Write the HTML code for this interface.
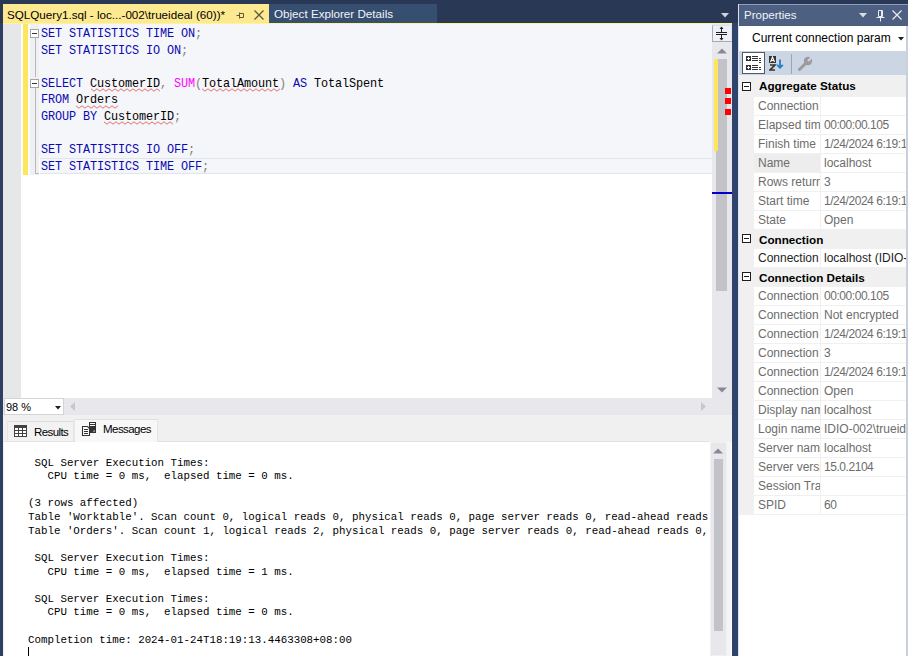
<!DOCTYPE html>
<html><head><meta charset="utf-8">
<style>
*{margin:0;padding:0;box-sizing:border-box}
html,body{width:908px;height:656px;overflow:hidden;background:#293955;font-family:"Liberation Sans",sans-serif}
.a{position:absolute}
.t{white-space:pre;line-height:1}
/* doc tabs */
#tab1{left:3px;top:4px;width:266px;height:19px;background:#fde98f}
#tab2{left:269px;top:4px;width:168px;height:19px;background:#364e6f}
/* editor */
#ed{left:3px;top:23px;width:729px;height:375px;background:#fff;overflow:hidden}
.code{font-family:"Liberation Mono",monospace;font-size:11.85px;letter-spacing:-0.11px;line-height:16.6px;white-space:pre;color:#000;}
.kw{color:#0a0ab0}
.fn{color:#ff00ff}
.gr{color:#808080}
.sq{}
.mono{font-family:"Liberation Mono",monospace;font-size:10.8px;line-height:13.63px;white-space:pre;color:#000}
.pn{font-size:11.5px;color:#6d6d6d;white-space:pre;line-height:1}

.cat{left:0;width:167px;height:19px;background:#f0f0f0}
.mbox{left:3px;top:4px;width:9px;height:9px;border:1px solid #1e1e1e;background:#fff}
.mline{left:5px;top:8px;width:5px;height:1px;background:#1e1e1e}
.ct{left:20px;top:4px;font-size:11.7px;font-weight:bold;color:#000}
.row{left:0;width:167px;height:19px;background:#f0f0f0}
.nm{left:15px;top:0;width:66px;height:19px;background:#fff;border-bottom:1px solid #f0f0f0;overflow:hidden}
.nsel{background:#ededed}
.vl{left:82px;top:0;width:85px;height:19px;background:#fff;border-bottom:1px solid #f0f0f0;overflow:hidden}
.nm span{position:absolute;left:4px;top:3px;font-size:12px;color:#6d6d6d}
.vl span{position:absolute;left:3px;top:3px;font-size:12px;color:#6d6d6d}
.num{letter-spacing:-0.45px}
.dk .nm span,.dk .vl span{color:#1e1e1e}
</style></head><body>
<!-- tabs -->
<div class="a" id="tab1">
  <div class="a t" style="left:4px;top:5px;font-size:11.65px;color:#000">SQLQuery1.sql - loc...-002\trueideal (60))*</div>
  <svg class="a" style="left:233px;top:7px" width="9" height="9" viewBox="0 0 9 9"><path d="M0.5 4.5H3.5M3.5 1.5V7.5M3.5 2.5H7.5V6.5H3.5" stroke="#5c5a3c" stroke-width="1" fill="none"/></svg>
  <svg class="a" style="left:251px;top:6px" width="10" height="10" viewBox="0 0 10 10"><path d="M0.5 0.5L9.5 9.5M9.5 0.5L0.5 9.5" stroke="#5c5a3c" stroke-width="1.3" fill="none"/></svg>
</div>
<div class="a" id="tab2">
  <div class="a t" style="left:5px;top:4px;font-size:11.65px;color:#f2f4f8">Object Explorer Details</div>
</div>
<svg class="a" style="left:721px;top:13px" width="9" height="5" viewBox="0 0 9 5"><path d="M0 0H8L4 4.5Z" fill="#ced4dd"/></svg>

<div class="a" id="ed">
  <div class="a" style="left:0;top:0;width:729px;height:1px;background:#fff29d"></div>
  <div class="a" style="left:0;top:1px;width:18px;height:374px;background:#e6e7e8"></div>
  <div class="a" style="left:20px;top:1px;width:5px;height:151px;background:#fee65b"></div>
  <div class="a" style="left:25px;top:1px;width:684px;height:134px;background:#f5f6fa"></div>
  <div class="a" style="left:25px;top:1px;width:2px;height:151px;background:#fcfcfd"></div>
  <div class="a" style="left:27px;top:1px;width:9px;height:151px;background:#eef0f4"></div>
  <div class="a" style="left:37px;top:135px;width:672px;height:16px;border-top:1px solid #e3e4e9;border-bottom:1px solid #e3e4e9;background:#f5f6fa"></div>
  <!-- fold boxes -->
  <div class="a" style="left:27px;top:6px;width:9px;height:9px;border:1px solid #a5a5a5;background:#fff"></div>
  <div class="a" style="left:29px;top:10px;width:5px;height:1px;background:#333"></div>
  <div class="a" style="left:32px;top:15px;width:1px;height:39px;background:#b8b8b8"></div>
  <div class="a" style="left:27px;top:56px;width:9px;height:9px;border:1px solid #a5a5a5;background:#fff"></div>
  <div class="a" style="left:29px;top:60px;width:5px;height:1px;background:#333"></div>
  <div class="a" style="left:32px;top:65px;width:1px;height:86px;background:#b8b8b8"></div>
  <div class="a" style="left:32px;top:150px;width:4px;height:1px;background:#b8b8b8"></div>
  <div class="a code" style="left:38px;top:3px"><span class="kw">SET STATISTICS TIME ON</span><span class="gr">;</span>
<span class="kw">SET STATISTICS IO ON</span><span class="gr">;</span>

<span class="kw">SELECT</span> <span class="sq">CustomerID</span><span class="gr">,</span> <span class="fn">SUM</span><span class="gr">(</span><span class="sq">TotalAmount</span><span class="gr">)</span> <span class="kw">AS</span> TotalSpent
<span class="kw">FROM</span> <span class="sq">Orders</span>
<span class="kw">GROUP BY</span> <span class="sq">CustomerID</span><span class="gr">;</span>

<span class="kw">SET STATISTICS IO OFF</span><span class="gr">;</span>
<span class="kw">SET STATISTICS TIME OFF</span><span class="gr">;</span></div>
<svg class="a" style="left:88px;top:65px" width="73" height="4"><polyline points="0.0,0.8 3.0,3.2 6.0,0.8 9.0,3.2 12.0,0.8 15.0,3.2 18.0,0.8 21.0,3.2 24.0,0.8 27.0,3.2 30.0,0.8 33.0,3.2 36.0,0.8 39.0,3.2 42.0,0.8 45.0,3.2 48.0,0.8 51.0,3.2 54.0,0.8 57.0,3.2 60.0,0.8 63.0,3.2 66.0,0.8 69.0,3.2" fill="none" stroke="#e07070" stroke-width="1"/></svg>
<svg class="a" style="left:199px;top:65px" width="81" height="4"><polyline points="0.0,0.8 3.0,3.2 6.0,0.8 9.0,3.2 12.0,0.8 15.0,3.2 18.0,0.8 21.0,3.2 24.0,0.8 27.0,3.2 30.0,0.8 33.0,3.2 36.0,0.8 39.0,3.2 42.0,0.8 45.0,3.2 48.0,0.8 51.0,3.2 54.0,0.8 57.0,3.2 60.0,0.8 63.0,3.2 66.0,0.8 69.0,3.2 72.0,0.8 75.0,3.2 78.0,0.8" fill="none" stroke="#e07070" stroke-width="1"/></svg>
<svg class="a" style="left:73px;top:82px" width="46" height="4"><polyline points="0.0,0.8 3.0,3.2 6.0,0.8 9.0,3.2 12.0,0.8 15.0,3.2 18.0,0.8 21.0,3.2 24.0,0.8 27.0,3.2 30.0,0.8 33.0,3.2 36.0,0.8 39.0,3.2 42.0,0.8" fill="none" stroke="#e07070" stroke-width="1"/></svg>
<svg class="a" style="left:101px;top:98px" width="74" height="4"><polyline points="0.0,0.8 3.0,3.2 6.0,0.8 9.0,3.2 12.0,0.8 15.0,3.2 18.0,0.8 21.0,3.2 24.0,0.8 27.0,3.2 30.0,0.8 33.0,3.2 36.0,0.8 39.0,3.2 42.0,0.8 45.0,3.2 48.0,0.8 51.0,3.2 54.0,0.8 57.0,3.2 60.0,0.8 63.0,3.2 66.0,0.8 69.0,3.2" fill="none" stroke="#e07070" stroke-width="1"/></svg>
  <!-- vscroll -->
  <div class="a" style="left:709px;top:1px;width:20px;height:374px;background:#e8e8ec"></div>
  <div class="a" style="left:709px;top:2px;width:20px;height:17px;background:#eef0f8;border:1px solid #dfe2ea;border-left-color:#a9abb3;border-bottom-color:#a9abb3"></div>
  <svg class="a" style="left:712px;top:2px" width="14" height="17" viewBox="0 0 14 17"><path d="M1 7.5H12M1 9.5H12M6.5 3V7M6.5 10V14" stroke="#1e1e1e" stroke-width="1" fill="none"/><path d="M6.5 1.5L4.5 4H8.5ZM6.5 15.5L4.5 13H8.5Z" fill="#1e1e1e"/></svg>
  <svg class="a" style="left:714px;top:25px" width="10" height="6" viewBox="0 0 10 6"><path d="M0 5.5H10L5 0.5Z" fill="#868999"/></svg>
  <div class="a" style="left:713px;top:36px;width:11px;height:232px;background:#c2c3c9"></div>
  <div class="a" style="left:711px;top:36px;width:4px;height:92px;background:#fee65b"></div>
  <div class="a" style="left:722px;top:65px;width:6px;height:6px;background:#ff0000"></div>
  <div class="a" style="left:722px;top:75px;width:6px;height:6px;background:#ff0000"></div>
  <div class="a" style="left:722px;top:86px;width:6px;height:6px;background:#ff0000"></div>
  <div class="a" style="left:709px;top:169px;width:20px;height:2px;background:#0000cd"></div>
  <svg class="a" style="left:714px;top:364px" width="10" height="6" viewBox="0 0 10 6"><path d="M0 0.5H10L5 5.5Z" fill="#868999"/></svg>
</div>

<!-- zoom bar -->
<div class="a" style="left:3px;top:398px;width:729px;height:17px;background:#e8e8ec">
  <div class="a" style="left:1px;top:0;width:60px;height:17px;background:#fff;border:1px solid #d4d4d8"></div>
  <div class="a t" style="left:3px;top:4px;font-size:11px;color:#000">98 %</div>
  <svg class="a" style="left:52px;top:8px" width="6" height="4" viewBox="0 0 6 4"><path d="M0 0H6L3 3.5Z" fill="#1e1e1e"/></svg>
  <svg class="a" style="left:67px;top:4px" width="5" height="9" viewBox="0 0 5 9"><path d="M5 0V9L0 4.5Z" fill="#c6c6cc"/></svg>
  <svg class="a" style="left:698px;top:4px" width="5" height="9" viewBox="0 0 5 9"><path d="M0 0V9L5 4.5Z" fill="#c6c6cc"/></svg>
</div>
<!-- results tabs -->
<div class="a" style="left:3px;top:415px;width:729px;height:27px;background:#f0f0f0">
  <div class="a" style="left:0;top:26px;width:706px;height:1px;background:#e2e2e2"></div>
  <div class="a" style="left:4px;top:6px;width:67px;height:20px;background:#f2f2f2;border-top:1px solid #dcdcdc;border-left:1px solid #e6e6e6;border-right:1px solid #e6e6e6"></div>
  <div class="a" style="left:71px;top:4px;width:84px;height:23px;background:#f8f8f8;border-top:1px solid #e0e0e0;border-left:1px solid #e6e6e6;border-right:1px solid #e6e6e6"></div>
  <!-- grid icon -->
  <svg class="a" style="left:11px;top:10px" width="13" height="12" viewBox="0 0 13 12"><rect x="0" y="0" width="13" height="12" fill="#424242"/><g fill="#fff"><rect x="1" y="3" width="3" height="2"/><rect x="5" y="3" width="3" height="2"/><rect x="9" y="3" width="3" height="2"/><rect x="1" y="6" width="3" height="2"/><rect x="5" y="6" width="3" height="2"/><rect x="9" y="6" width="3" height="2"/><rect x="1" y="9" width="3" height="2"/><rect x="5" y="9" width="3" height="2"/><rect x="9" y="9" width="3" height="2"/></g></svg>
  <div class="a t" style="left:31px;top:12px;font-size:11.5px;color:#000;letter-spacing:-0.6px">Results</div>
  <!-- messages icon -->
  <svg class="a" style="left:78px;top:6px" width="16" height="16" viewBox="0 0 16 16"><rect x="8" y="1" width="7" height="11" fill="#333"/><rect x="9" y="2" width="5" height="1" fill="#fff"/><rect x="9" y="4" width="5" height="1" fill="#fff"/><rect x="12.5" y="9.5" width="1.2" height="1.2" fill="#fff"/><path d="M1.5 5.5H6.5L8.5 7.5V14.5H1.5Z" fill="#fff" stroke="#333" stroke-width="1.1"/><path d="M3 8.5H7M3 10.5H7M3 12.5H7" stroke="#333" stroke-width="1"/></svg>
  <div class="a t" style="left:100px;top:9px;font-size:11.5px;color:#000;letter-spacing:-0.55px">Messages</div>
</div>
<!-- messages -->
<div class="a" style="left:3px;top:442px;width:1px;height:214px;background:#eef0f4"></div>
<div class="a" style="left:4px;top:442px;width:728px;height:214px;background:#fff;overflow:hidden">
  <div class="a" style="left:0;top:0;width:705px;height:214px;overflow:hidden">
<div class="a mono" style="left:24px;top:14.5px"> SQL Server Execution Times:
   CPU time = 0 ms,  elapsed time = 0 ms.

(3 rows affected)
Table 'Worktable'. Scan count 0, logical reads 0, physical reads 0, page server reads 0, read-ahead reads 0, page server read-ahead reads 0, lob logical reads 0
Table 'Orders'. Scan count 1, logical reads 2, physical reads 0, page server reads 0, read-ahead reads 0, page server read-ahead reads 0, lob logical reads 0

 SQL Server Execution Times:
   CPU time = 0 ms,  elapsed time = 1 ms.

 SQL Server Execution Times:
   CPU time = 0 ms,  elapsed time = 0 ms.

Completion time: 2024-01-24T18:19:13.4463308+08:00</div>
  <div class="a" style="left:24px;top:205px;width:1px;height:9px;background:#000"></div>
  </div>
  <div class="a" style="left:706px;top:0;width:17px;height:214px;background:#e8e8ec;border:1px solid #f0f0f3"></div>
  <svg class="a" style="left:709px;top:6px" width="10" height="6" viewBox="0 0 10 6"><path d="M0 5.5H10L5 0.5Z" fill="#868999"/></svg>
  <div class="a" style="left:710px;top:17px;width:9px;height:172px;background:#c2c3c9"></div>
  <div class="a" style="left:723px;top:0;width:4px;height:214px;background:#f5f5f5"></div>
</div>

<!-- properties -->
<div class="a" style="left:732px;top:23px;width:6px;height:633px;background:#30436c"></div>
<div class="a" style="left:0;top:23px;width:3px;height:633px;background:#2f3f62"></div>
<div class="a" style="left:738px;top:4px;width:170px;height:652px;background:#fff;border-left:1px solid #dde3ee">
  <div class="a" style="left:0;top:0;width:169px;height:22px;background:#4d6082;border-top:1px solid #8b9cbc"></div>
  <div class="a t" style="left:5px;top:6px;font-size:11.5px;color:#f0f2f6">Properties</div>
  <svg class="a" style="left:120px;top:9px" width="9" height="5" viewBox="0 0 9 5"><path d="M0 0H8L4 4.5Z" fill="#d8dde6"/></svg>
  <svg class="a" style="left:137px;top:6px" width="9" height="12" viewBox="0 0 9 12"><path d="M2.5 0.5H6.5V6.5H2.5Z M0.5 7.5H8.5 M4.5 7.5V11.5 M5.5 1V6" stroke="#e8ecf2" stroke-width="1" fill="none"/></svg>
  <svg class="a" style="left:153px;top:6px" width="10" height="10" viewBox="0 0 10 10"><path d="M0.5 0.5L9.5 9.5M9.5 0.5L0.5 9.5" stroke="#e8ecf2" stroke-width="1.2" fill="none"/></svg>
  
  <div class="a t" style="left:13px;top:28px;font-size:12px;color:#000">Current connection param</div>
  <svg class="a" style="left:159px;top:33px" width="6" height="4" viewBox="0 0 6 4"><path d="M0 0H6L3 3.5Z" fill="#1e1e1e"/></svg>
  <div class="a" style="left:0;top:47px;width:167px;height:24px;background:#ccd5e4"></div>
  <div class="a" style="left:3px;top:48px;width:23px;height:22px;background:#fff;border:1px solid #4d5a70"></div>
  <svg class="a" style="left:7px;top:52px" width="15" height="15" viewBox="0 0 15 15"><rect x="0" y="0" width="5" height="5" fill="#333"/><rect x="0" y="9" width="5" height="5" fill="#333"/><path d="M1 2.5H4M2.5 1V4M1 11.5H4M2.5 10V13" stroke="#fff" stroke-width="1"/><path d="M6 0.5H12M6 2.5H12M6 4.5H12M6 9.5H12M6 11.5H12M6 13.5H12" stroke="#333" stroke-width="1"/><path d="M13 2.5H15M13 4.5H15M13 6.5H15M13 11.5H15M13 13.5H15" stroke="#333" stroke-width="1"/></svg>
  <svg class="a" style="left:30px;top:51px" width="16" height="16" viewBox="0 0 16 16"><rect x="0" y="1" width="7" height="7" fill="#333"/><path d="M1.5 7L3.5 2L5.5 7M2.2 5.5H4.8" stroke="#fff" stroke-width="1.1" fill="none"/><path d="M1 10H6L1 15H6" stroke="#333" stroke-width="1.6" fill="none"/><path d="M11 4.5V12.5M8.2 9.8L11 12.8L13.8 9.8" stroke="#1f7fc4" stroke-width="1.8" fill="none"/></svg>
  <div class="a" style="left:52px;top:50px;width:1px;height:20px;background:#9aa4b5"></div>
  <svg class="a" style="left:59px;top:52px" width="15" height="15" viewBox="0 0 15 15"><path d="M1.5 13.5L7 8" stroke="#9b9b9b" stroke-width="3" stroke-linecap="round"/><circle cx="10" cy="5" r="4.2" fill="#9b9b9b"/><path d="M10 5L13.5 1.5" stroke="#ccd5e4" stroke-width="2.2"/></svg>
<div class="a cat" style="top:71px;height:22px"><div class="a mbox" style="top:7px"></div><div class="a mline" style="top:11px"></div><div class="a t ct" style="top:5px">Aggregate Status</div></div>
<div class="a row" style="top:93px"><div class="a nm"><span class="t">Connection</span></div><div class="a vl"><span class="t"></span></div></div>
<div class="a row" style="top:112px"><div class="a nm"><span class="t">Elapsed tim</span></div><div class="a vl"><span class="t num">00:00:00.105</span></div></div>
<div class="a row" style="top:131px"><div class="a nm"><span class="t">Finish time</span></div><div class="a vl"><span class="t num">1/24/2024 6:19:13 PM</span></div></div>
<div class="a row" style="top:150px"><div class="a nm nsel"><span class="t">Name</span></div><div class="a vl"><span class="t">localhost</span></div></div>
<div class="a row" style="top:169px"><div class="a nm"><span class="t">Rows returned</span></div><div class="a vl"><span class="t num">3</span></div></div>
<div class="a row" style="top:188px"><div class="a nm"><span class="t">Start time</span></div><div class="a vl"><span class="t num">1/24/2024 6:19:13 PM</span></div></div>
<div class="a row" style="top:207px"><div class="a nm"><span class="t">State</span></div><div class="a vl"><span class="t">Open</span></div></div>
<div class="a cat" style="top:226px"><div class="a mbox"></div><div class="a mline"></div><div class="a t ct">Connection</div></div>
<div class="a row dk" style="top:245px"><div class="a nm"><span class="t">Connection</span></div><div class="a vl"><span class="t">localhost (IDIO-002\trueideal)</span></div></div>
<div class="a cat" style="top:264px"><div class="a mbox"></div><div class="a mline"></div><div class="a t ct">Connection Details</div></div>
<div class="a row" style="top:283px"><div class="a nm"><span class="t">Connection</span></div><div class="a vl"><span class="t num">00:00:00.105</span></div></div>
<div class="a row" style="top:302px"><div class="a nm"><span class="t">Connection</span></div><div class="a vl"><span class="t">Not encrypted</span></div></div>
<div class="a row" style="top:321px"><div class="a nm"><span class="t">Connection</span></div><div class="a vl"><span class="t num">1/24/2024 6:19:13 PM</span></div></div>
<div class="a row" style="top:340px"><div class="a nm"><span class="t">Connection</span></div><div class="a vl"><span class="t num">3</span></div></div>
<div class="a row" style="top:359px"><div class="a nm"><span class="t">Connection</span></div><div class="a vl"><span class="t num">1/24/2024 6:19:13 PM</span></div></div>
<div class="a row" style="top:378px"><div class="a nm"><span class="t">Connection</span></div><div class="a vl"><span class="t">Open</span></div></div>
<div class="a row" style="top:397px"><div class="a nm"><span class="t">Display name</span></div><div class="a vl"><span class="t">localhost</span></div></div>
<div class="a row" style="top:416px"><div class="a nm"><span class="t">Login name</span></div><div class="a vl"><span class="t">IDIO-002\trueideal</span></div></div>
<div class="a row" style="top:435px"><div class="a nm"><span class="t">Server name</span></div><div class="a vl"><span class="t">localhost</span></div></div>
<div class="a row" style="top:454px"><div class="a nm"><span class="t">Server version</span></div><div class="a vl"><span class="t num">15.0.2104</span></div></div>
<div class="a row" style="top:473px"><div class="a nm"><span class="t">Session Tracing ID</span></div><div class="a vl"><span class="t"></span></div></div>
<div class="a row" style="top:492px"><div class="a nm"><span class="t">SPID</span></div><div class="a vl"><span class="t num">60</span></div></div>
  <div class="a" style="left:167px;top:22px;width:2px;height:630px;background:#c9cfdb"></div>
</div>
</body></html>
